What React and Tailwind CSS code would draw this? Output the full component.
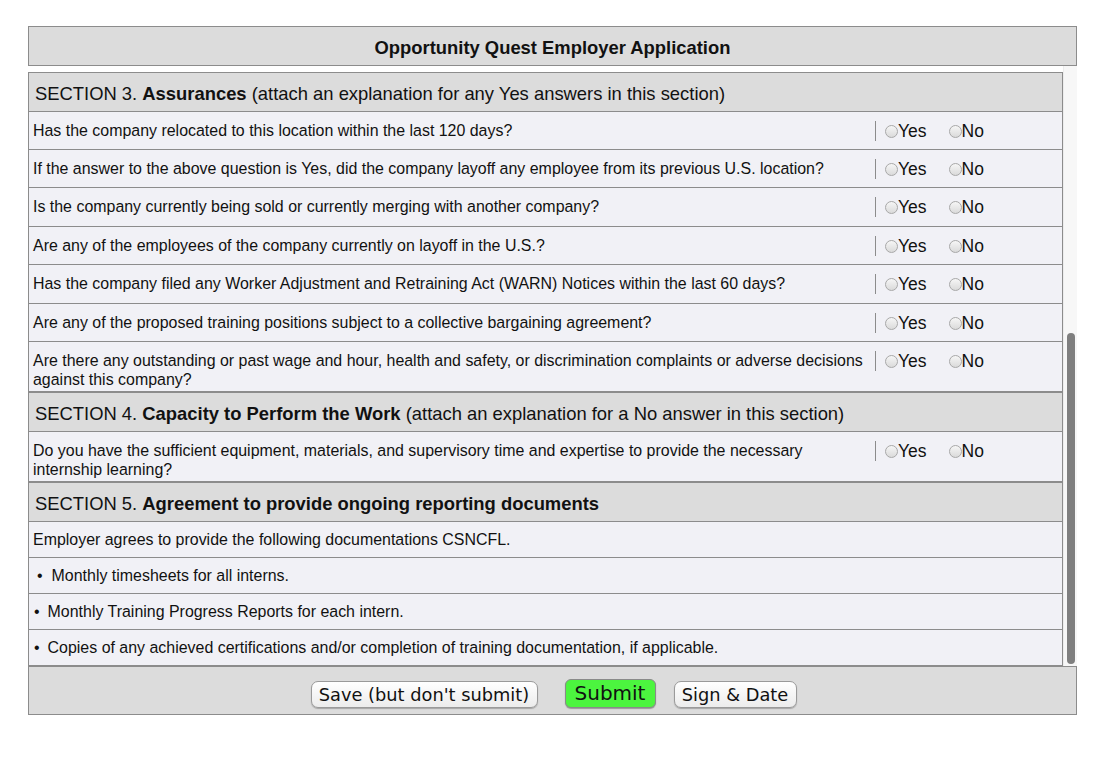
import React from 'react'

const questions3 = [
    { q: 'Has the company relocated to this location within the last 120 days?', h: 'h-[38px]' },
    { q: 'If the answer to the above question is Yes, did the company layoff any employee from its previous U.S. location?', h: 'h-[38px]' },
    { q: 'Is the company currently being sold or currently merging with another company?', h: 'h-[39px]' },
    { q: 'Are any of the employees of the company currently on layoff in the U.S.?', h: 'h-[38px]' },
    { q: 'Has the company filed any Worker Adjustment and Retraining Act (WARN) Notices within the last 60 days?', h: 'h-[39px]' },
    { q: 'Are any of the proposed training positions subject to a collective bargaining agreement?', h: 'h-[38px]' },
    { q: 'Are there any outstanding or past wage and hour, health and safety, or discrimination complaints or adverse decisions against this company?', h: 'h-[50px]' },
]

const Radio = () => (
    <span className="inline-block w-[13px] h-[13px] rounded-full border border-[#a8a8a8] bg-gradient-to-b from-[#f6f6f6] to-[#dadada]"></span>
)

function QuestionRow({ q, h }) {
    return (
        <div className={`flex ${h} border-b border-[#8c8c8c] bg-[#f1f1f6]`}>
            <div className="w-[846px] pl-[4px] pr-[4px] pt-[9px] text-[15.95px] leading-[19px] text-[#111]">{q}</div>
            <div className="flex items-start pt-[9px]">
                <span className="h-[20px] border-l border-[#8c8c8c]"></span>
                <label className="flex items-center ml-[9px] text-[17.5px] leading-[20px] text-[#111]">
                    <Radio />Yes
                </label>
                <label className="flex items-center ml-[22px] text-[17.5px] leading-[20px] text-[#111]">
                    <Radio />No
                </label>
            </div>
        </div>
    )
}

function SectionHeader({ num, title, note, h }) {
    return (
        <div className={`flex items-center ${h} pt-[3px] border-b border-[#8c8c8c] bg-[#dcdcdc] pl-[6px] text-[18.4px] text-[#111]`}>
            SECTION {num}.&nbsp;<b>{title}</b>{note && <span>&nbsp;{note}</span>}
        </div>
    )
}

function ListRow({ children, pl }) {
    return (
        <div className={`flex items-center h-[36px] border-b border-[#8c8c8c] bg-[#f1f1f6] ${pl} text-[15.95px] text-[#111]`}>
            {children}
        </div>
    )
}

export default function App() {
    return (
        <div className="min-h-screen bg-white pt-[26px] pl-[28px]" style={{ fontFamily: '"Liberation Sans", Arial, sans-serif' }}>
            <div className="w-[1049px]">
                <div className="flex items-center justify-center h-[40px] pt-[3px] border border-[#8c8c8c] bg-[#dcdcdc] text-[18.4px] font-bold text-[#111]">
                    Opportunity Quest Employer Application
                </div>

                <div className="flex h-[600px]">
                    <div className="w-[1035px] pt-[6px] overflow-hidden">
                        <div className="border-x border-t border-[#8c8c8c]">
                            <SectionHeader num="3" title="Assurances" note="(attach an explanation for any Yes answers in this section)" h="h-[39px]" />
                            {questions3.map((r, i) => <QuestionRow key={i} {...r} />)}
                            <div className="border-t border-[#8c8c8c]">
                                <SectionHeader num="4" title="Capacity to Perform the Work" note="(attach an explanation for a No answer in this section)" h="h-[39px]" />
                            </div>
                            <QuestionRow q="Do you have the sufficient equipment, materials, and supervisory time and expertise to provide the necessary internship learning?" h="h-[50px]" />
                            <div className="border-t border-[#8c8c8c]">
                                <SectionHeader num="5" title="Agreement to provide ongoing reporting documents" h="h-[39px]" />
                            </div>
                            <ListRow pl="pl-[4px]">Employer agrees to provide the following documentations CSNCFL.</ListRow>
                            <ListRow pl="pl-[8px]"><span className="mr-[9px]">•</span>Monthly timesheets for all interns.</ListRow>
                            <ListRow pl="pl-[5px]"><span className="mr-[8px]">•</span>Monthly Training Progress Reports for each intern.</ListRow>
                            <ListRow pl="pl-[5px]"><span className="mr-[8px]">•</span>Copies of any achieved certifications and/or completion of training documentation, if applicable.</ListRow>
                            <ListRow pl="pl-[5px]">&nbsp;</ListRow>
                        </div>
                    </div>
                    {/* scrollbar */}
                    <div className="w-[14px] bg-[#f7f7f7] border-l border-[#ececec] flex flex-col justify-end pb-[2px] pl-[3px]">
                        <div className="w-[8px] h-[331px] rounded-full bg-[#7f7f7f]"></div>
                    </div>
                </div>

                <div className="flex items-start justify-center h-[49px] pt-[14px] border border-[#8c8c8c] bg-[#dcdcdc] pl-[2px]" style={{ fontFamily: '"DejaVu Sans", sans-serif' }}>
                    <button className="w-[227px] h-[27px] rounded-[7px] border border-[#9a9a9a] bg-gradient-to-b from-white to-[#ececec] shadow-[0_1px_1px_rgba(0,0,0,0.25)] text-[17.8px] leading-[25px] text-[#111]">Save (but don't submit)</button>
                    <button className="ml-[27px] -mt-[2px] w-[91px] h-[29px] rounded-[6px] border border-[#8a8a8a] bg-[#4cf53f] shadow-[0_1px_1px_rgba(0,0,0,0.3)] text-[20px] leading-[27px] text-[#111]">Submit</button>
                    <button className="ml-[18px] w-[123px] h-[27px] rounded-[7px] border border-[#9a9a9a] bg-gradient-to-b from-white to-[#ececec] shadow-[0_1px_1px_rgba(0,0,0,0.25)] text-[17.8px] leading-[25px] text-[#111]">Sign &amp; Date</button>
                </div>
            </div>
        </div>
    )
}
